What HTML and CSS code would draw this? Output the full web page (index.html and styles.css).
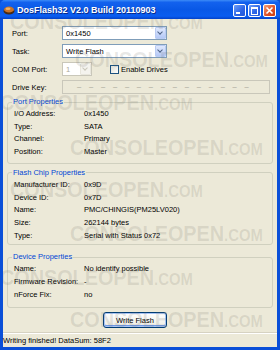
FILE: index.html
```html
<!DOCTYPE html>
<html lang="en">
  <head>
    <meta charset="UTF-8" />
    <title>DosFlash32 V2.0 Build 20110903</title>
    <link rel="stylesheet" href="styles.css">
  </head>
  <body>
    <div class="window">
      <!-- Title bar -->
      <div class="titlebar">
        <svg class="app-icon" width="12" height="10" viewBox="0 0 12 10">
          <ellipse cx="6" cy="6" rx="5.5" ry="3.5" fill="#4a2a10" />
          <ellipse cx="6" cy="4.5" rx="5" ry="3" fill="#c8742a" />
          <ellipse cx="5" cy="3.8" rx="2.5" ry="1.3" fill="#f0b060" />
        </svg>
        <span class="title">DosFlash32 V2.0 Build 20110903</span>
        <div class="caption-buttons">
          <span class="cap-btn min"></span>
          <span class="cap-btn max"></span>
          <span class="cap-btn close">
            <svg width="9" height="9" viewBox="0 0 9 9">
              <path d="M1.5 1.5 L7.5 7.5 M7.5 1.5 L1.5 7.5" stroke="#fff" stroke-width="1.6" />
            </svg>
          </span>
        </div>
      </div>

      <div class="client">
        <div class="settings">
          <div class="row">
            <span class="label">Port:</span>
            <div class="combo"><span class="combo-text">0x1450</span><span class="drop"></span></div>
          </div>
          <div class="row">
            <span class="label">Task:</span>
            <div class="combo"><span class="combo-text">Write Flash</span><span class="drop"></span></div>
          </div>
          <div class="row">
            <span class="label">COM Port:</span>
            <div class="combo disabled small"><span class="combo-text">1</span><span class="drop"></span></div>
            <label class="check"><span class="box"></span>Enable Drives</label>
          </div>
          <div class="row">
            <span class="label">Drive Key:</span>
            <div class="keybox">–––––––––––––––</div>
          </div>
        </div>

        <fieldset class="group port">
          <legend>Port Properties</legend>
          <div class="prop"><span>I/O Address:</span><span>0x1450</span></div>
          <div class="prop"><span>Type:</span><span>SATA</span></div>
          <div class="prop"><span>Channel:</span><span>Primary</span></div>
          <div class="prop"><span>Position:</span><span>Master</span></div>
        </fieldset>

        <fieldset class="group chip">
          <legend>Flash Chip Properties</legend>
          <div class="prop"><span>Manufacturer ID:</span><span>0x9D</span></div>
          <div class="prop"><span>Device ID:</span><span>0x7D</span></div>
          <div class="prop"><span>Name:</span><span>PMC/CHINGIS(PM25LV020)</span></div>
          <div class="prop"><span>Size:</span><span>262144 bytes</span></div>
          <div class="prop"><span>Type:</span><span>Serial with Status 0x72</span></div>
        </fieldset>

        <fieldset class="group device">
          <legend>Device Properties</legend>
          <div class="prop"><span>Name:</span><span>No identify possible</span></div>
          <div class="prop"><span>Firmware Revision:</span><span>-</span></div>
          <div class="prop"><span>nForce Fix:</span><span>no</span></div>
        </fieldset>

        <div class="actions">
          <button class="xp-button">Write Flash</button>
        </div>

        <!-- watermark of the source site, laid over the window -->
        <div class="watermarks">
          <span class="wm" style="top:-8px;left:7px">CONSOLEOPEN<small>.COM</small></span>
          <span class="wm" style="top:30px;left:72px">CONSOLEOPEN<small>.COM</small></span>
          <span class="wm" style="top:73px;left:-3px">CONSOLEOPEN<small>.COM</small></span>
          <span class="wm" style="top:118px;left:67px">CONSOLEOPEN<small>.COM</small></span>
          <span class="wm" style="top:160px;left:7px">CONSOLEOPEN<small>.COM</small></span>
          <span class="wm" style="top:204px;left:67px">CONSOLEOPEN<small>.COM</small></span>
          <span class="wm" style="top:248px;left:-3px">CONSOLEOPEN<small>.COM</small></span>
          <span class="wm" style="top:290px;left:67px">CONSOLEOPEN<small>.COM</small></span>
        </div>
      </div>

      <div class="statusbar">Writing finished! DataSum: 58F2</div>
    </div>
  </body>
</html>
```

FILE: styles.css
```css
body {
  margin: 0;
  font-family: "Liberation Sans", Arial, sans-serif;
  font-size: 7.5px;
  color: #000;
}

.window {
  width: 280px;
  height: 350px;
  box-sizing: border-box;
  display: flex;
  flex-direction: column;
  background: #0a4fd8;
  padding: 0 3px 3px 3px;
}

/* Title bar */
.titlebar {
  height: 19px;
  margin: 0 -3px;
  display: flex;
  align-items: center;
  padding: 0 4px 0 3px;
  background: linear-gradient(to bottom, #3d8cf7 0%, #1362ee 12%, #0958e6 50%, #0a5df0 85%, #0442c8 100%);
  border-radius: 5px 5px 0 0;
}

.app-icon {
  margin-right: 2px;
}

.title {
  flex: 1;
  color: #fff;
  font-weight: bold;
  font-size: 9px;
  text-shadow: 1px 1px 0 #0a2c8a;
  white-space: nowrap;
}

.caption-buttons {
  display: flex;
  gap: 2px;
  margin-top: 2px;
}

.cap-btn {
  width: 11px;
  height: 11px;
  border: 1px solid #fff;
  border-radius: 2px;
  background: linear-gradient(135deg, #6fa0f8, #2a63e6 60%, #2358d8);
  position: relative;
  display: flex;
  align-items: center;
  justify-content: center;
}

.cap-btn.min::after {
  content: "";
  position: absolute;
  left: 2px;
  bottom: 2px;
  width: 4px;
  height: 2px;
  background: #fff;
}

.cap-btn.max::after {
  content: "";
  width: 5px;
  height: 5px;
  border: 1px solid #fff;
  border-top-width: 2px;
}

.cap-btn.close {
  background: linear-gradient(135deg, #f2a07a, #e0542a 55%, #c93d14);
}

/* Client area */
.client {
  flex: 1;
  position: relative;
  overflow: hidden;
  background: #ece9d8;
  display: flex;
  flex-direction: column;
}

.settings {
  padding: 7px 7px 0 9px;
  display: flex;
  flex-direction: column;
  gap: 4px;
}

.row {
  height: 14px;
  display: flex;
  align-items: center;
}

.label {
  width: 50px;
  flex: none;
}

.combo {
  width: 105px;
  height: 14px;
  box-sizing: border-box;
  border: 1px solid #7f9db9;
  background: #fff;
  display: flex;
  align-items: center;
}

.combo-text {
  flex: 1;
  padding-left: 3px;
}

.drop {
  width: 11px;
  height: 12px;
  box-sizing: border-box;
  border: 1px solid #b9cbf3;
  border-radius: 1px;
  background: linear-gradient(to bottom, #dfe8fd, #b4c8f6);
  position: relative;
}

.drop::after {
  content: "";
  position: absolute;
  left: 2px;
  top: 2px;
  width: 3px;
  height: 3px;
  border-right: 1.5px solid #4d6185;
  border-bottom: 1.5px solid #4d6185;
  transform: rotate(45deg);
}

.combo.small {
  width: 30px;
}

.combo.disabled {
  border-color: #c9c7ba;
  color: #aca899;
}

.combo.disabled .drop {
  border-color: #e8e6dc;
  background: #f4f3ee;
}

.combo.disabled .drop::after {
  border-color: #c9c7ba;
}

.check {
  margin-left: 18px;
  display: flex;
  align-items: center;
  gap: 2px;
}

.check .box {
  width: 9px;
  height: 9px;
  box-sizing: border-box;
  border: 1px solid #1c5180;
  background: linear-gradient(135deg, #dcdcd4, #fff);
}

.keybox {
  width: 208px;
  height: 14px;
  box-sizing: border-box;
  border: 1px solid #c9c7ba;
  color: #a3a195;
  padding-left: 14px;
  letter-spacing: 7.8px;
  line-height: 12px;
  white-space: nowrap;
  overflow: hidden;
}

/* Group boxes */
.group {
  margin: 3px 4px 0 4px;
  padding: 1px 6px 4px 6px;
  border: 1px solid #d0d0bf;
  border-radius: 3px;
}

.group legend {
  color: #0046d5;
  padding: 0 1px;
  margin-left: -2px;
  line-height: 10px;
}

.group.chip {
  margin-top: 4px;
  padding-bottom: 2px;
}

.group.device {
  margin-top: 7px;
  padding-bottom: 6px;
}

.prop {
  display: flex;
  line-height: 12.7px;
}

.prop span:first-child {
  width: 70px;
}

/* Button */
.actions {
  padding: 4px 0 0 100px;
}

.xp-button {
  width: 64px;
  height: 16px;
  font-family: inherit;
  font-size: 7.5px;
  border: 1px solid #003c74;
  border-radius: 3px;
  background: linear-gradient(to bottom, #ffffff, #f0f0ea 80%, #d6d0c5);
  box-shadow: inset 0 0 0 1px #a8c4f4, inset 0 -1px 0 1px #6f98e6;
  padding: 0;
}

/* Status bar */
.statusbar {
  height: 15px;
  box-sizing: border-box;
  background: #ece9d8;
  border-top: 1px solid #d6d2c2;
  box-shadow: inset 0 1px 0 #fff;
  padding: 2px 0 0 0;
  line-height: 12px;
}

/* Watermark overlay */
.watermarks {
  position: absolute;
  inset: 0;
  pointer-events: none;
}

.wm {
  position: absolute;
  font-family: "Liberation Sans", Arial, sans-serif;
  font-weight: bold;
  font-size: 22px;
  line-height: 1;
  color: rgba(110, 108, 100, 0.16);
  transform: scaleX(0.9);
  transform-origin: left top;
  white-space: nowrap;
}

.wm small {
  font-size: 0.75em;
}
```
